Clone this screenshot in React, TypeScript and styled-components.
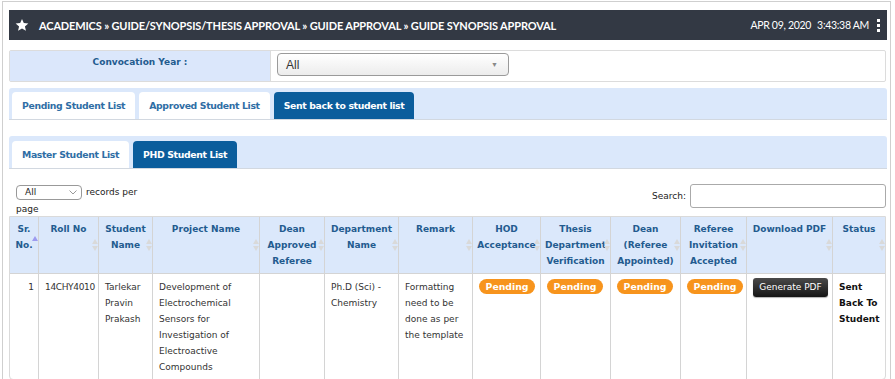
import styled, { createGlobalStyle } from "styled-components";

const GlobalStyle = createGlobalStyle`
  body {
    margin: 0;
    font-family: "DejaVu Sans", Verdana, sans-serif;
    font-size: 9px;
    color: #333;
    background: #fff;
  }
`;

const Page = styled.div`
  margin: 1px 4px 0 2px;
  border: 1px solid #cfcfcf;
  border-bottom: none;
  padding: 8px 3px 0 6px;
  height: 378px;
  box-sizing: border-box;
  overflow: hidden;
`;

const TopBar = styled.div`
  display: flex;
  align-items: center;
  height: 30px;
  background: #333944;
  color: #fff;
  padding: 0 6px 0 6px;
  font-family: Lato, "Liberation Sans", sans-serif;
  font-size: 11px;
`;

const Crumbs = styled.div`
  flex: 1;
  font-weight: bold;
  margin-left: 10px;
  letter-spacing: -0.15px;
`;

const Clock = styled.div`
  display: flex;
  gap: 6px;
  font-size: 10.5px;
  letter-spacing: -0.3px;
`;

const Dots = styled.span`
  display: flex;
  flex-direction: column;
  gap: 2px;
  margin: 0 1px 0 8px;
  span {
    width: 3px;
    height: 3px;
    background: #fff;
  }
`;

const ConvoRow = styled.div`
  display: flex;
  margin-top: 10px;
  margin-right: 1px;
  height: 30px;
  border: 1px solid #dcdcdc;
  border-radius: 2px;
`;

const ConvoLabel = styled.div`
  width: 261px;
  background: #dbe7fb;
  color: #235b8f;
  font-weight: bold;
  text-align: center;
  padding-top: 6px;
  box-sizing: border-box;
  border-right: 1px solid #dcdcdc;
`;

const ConvoCell = styled.div`
  flex: 1;
  padding: 2px 0 0 6px;
`;

const YearSelect = styled.div`
  width: 232px;
  height: 23px;
  box-sizing: border-box;
  border: 1px solid #9a9a9a;
  border-radius: 4px;
  background: linear-gradient(#ffffff, #ececec);
  display: flex;
  align-items: center;
  justify-content: space-between;
  padding: 0 10px 0 8px;
  font-family: "Liberation Sans", Arial, sans-serif;
  font-size: 12px;
  color: #333;
  span:last-child {
    font-size: 7px;
    color: #888;
  }
`;

const TabPanel = styled.div<{ $top: number; $pad: number }>`
  display: flex;
  gap: 4px;
  margin-top: ${(p) => p.$top}px;
  background: #dbe8fb;
  padding: ${(p) => p.$pad}px 3px 0 3px;
  border-bottom: 1px solid #d2d8e0;
  border-radius: 3px 3px 0 0;
`;

const Tab = styled.div<{ $active?: boolean }>`
  height: 27px;
  display: flex;
  align-items: center;
  padding: 0 10px;
  border-radius: 4px 4px 0 0;
  font-weight: bold;
  font-size: 9.3px;
  letter-spacing: -0.35px;
  background: ${(p) => (p.$active ? "#0b5d9c" : "#fff")};
  color: ${(p) => (p.$active ? "#fff" : "#2f6ea5")};
`;

const Controls = styled.div`
  display: flex;
  justify-content: space-between;
  align-items: flex-start;
  margin-top: 15px;
  padding: 0 1px 0 7px;
  height: 30px;
`;

const LengthBox = styled.div`
  width: 130px;
  line-height: 17px;
  color: #222;
`;

const LengthSelect = styled.span`
  display: inline-flex;
  align-items: center;
  justify-content: space-between;
  width: 66px;
  height: 15px;
  box-sizing: border-box;
  border: 1px solid #999;
  border-radius: 4px;
  padding: 0 4px 0 8px;
  margin: 1px 4px 0 0;
  vertical-align: top;
  font-size: 9px;
`;

const SearchBox = styled.label`
  display: flex;
  align-items: center;
  gap: 4px;
  color: #222;
`;

const SearchInput = styled.div`
  width: 196px;
  height: 24px;
  box-sizing: border-box;
  border: 1px solid #aaa;
  border-radius: 3px;
`;

const Table = styled.table`
  width: 877px;
  margin-top: 2px;
  border-collapse: separate;
  border-spacing: 0;
  table-layout: fixed;
  border: 1px solid #dadada;
  border-radius: 0 0 4px 4px;
`;

const Th = styled.th<{ $w: number }>`
  position: relative;
  box-sizing: border-box;
  width: ${(p) => p.$w}px;
  background: #dbe8fb;
  color: #235b8f;
  font-weight: bold;
  font-size: 9px;
  line-height: 16px;
  text-align: center;
  vertical-align: top;
  padding: 4px 1px 4px 1px;
  border-right: 1px solid #d4d4d4;
  border-bottom: 1px solid #d4d4d4;
  white-space: nowrap;
  &:last-child {
    border-right: none;
  }
`;

const SortIcon = styled.span<{ $asc?: boolean }>`
  position: absolute;
  right: 6px;
  top: ${(p) => (p.$asc ? "19px" : "22px")};
  width: 0;
  height: 0;
  &::before,
  &::after {
    content: "";
    position: absolute;
    left: 0;
    border-left: 3.5px solid transparent;
    border-right: 3.5px solid transparent;
  }
  &::before {
    top: 0;
    border-bottom: 5px solid ${(p) => (p.$asc ? "#9d9bf0" : "#d9d9d9")};
  }
  &::after {
    top: 7px;
    border-top: 5px solid ${(p) => (p.$asc ? "transparent" : "#d9d9d9")};
  }
`;

const Td = styled.td<{ $right?: boolean; $bold?: boolean; $tight?: boolean }>`
  font-size: 9px;
  line-height: 16px;
  vertical-align: top;
  padding: 5px 4px 4px 6px;
  color: ${(p) => (p.$bold ? "#111" : "#333")};
  font-weight: ${(p) => (p.$bold ? "bold" : "normal")};
  text-align: ${(p) => (p.$right ? "right" : "left")};
  letter-spacing: ${(p) => (p.$tight ? "-0.35px" : "normal")};
  border-right: 1px solid #d4d4d4;
  &:last-child {
    border-right: none;
  }
`;

const Badge = styled.span`
  display: inline-block;
  width: 56px;
  height: 15px;
  line-height: 15px;
  border-radius: 8px;
  background: #f7941d;
  color: #fff;
  font-weight: bold;
  text-align: center;
  font-size: 9.3px;
`;

const PdfButton = styled.span`
  display: inline-block;
  width: 75px;
  height: 19px;
  line-height: 19px;
  margin-top: -1px;
  border-radius: 3px;
  background: linear-gradient(#4a4a4a, #151515);
  color: #fff;
  text-align: center;
  font-size: 9px;
  box-shadow: 0 1px 1px rgba(0, 0, 0, 0.3);
`;

const Star = () => (
  <svg width="14" height="14" viewBox="0 0 24 24">
    <path
      fill="#fff"
      d="M12 1.5l3.1 7.2 7.8.6-5.9 5.1 1.8 7.6L12 17.9 5.2 22l1.8-7.6-5.9-5.1 7.8-.6z"
    />
  </svg>
);

const Chevron = () => (
  <svg width="8" height="5" viewBox="0 0 8 5">
    <path d="M0.5 0.5L4 4L7.5 0.5" fill="none" stroke="#999" strokeWidth="1" />
  </svg>
);

const columns: { label: string[]; w: number; asc?: boolean }[] = [
  { label: ["Sr.", "No."], w: 29, asc: true },
  { label: ["Roll No"], w: 60 },
  { label: ["Student", "Name"], w: 54 },
  { label: ["Project Name"], w: 107 },
  { label: ["Dean", "Approved", "Referee"], w: 65 },
  { label: ["Department", "Name"], w: 74 },
  { label: ["Remark"], w: 74 },
  { label: ["HOD", "Acceptance"], w: 68 },
  { label: ["Thesis", "Department", "Verification"], w: 70 },
  { label: ["Dean", "(Referee", "Appointed)"], w: 70 },
  { label: ["Referee", "Invitation", "Accepted"], w: 66 },
  { label: ["Download PDF"], w: 86 },
  { label: ["Status"], w: 52 },
];

export default function App() {
  return (
    <>
      <GlobalStyle />
      <Page>
        <TopBar>
          <Star />
          <Crumbs>
            ACADEMICS » GUIDE/SYNOPSIS/THESIS APPROVAL » GUIDE APPROVAL » GUIDE SYNOPSIS APPROVAL
          </Crumbs>
          <Clock>
            <span>APR 09, 2020</span>
            <span>3:43:38 AM</span>
          </Clock>
          <Dots>
            <span />
            <span />
            <span />
          </Dots>
        </TopBar>

        <ConvoRow>
          <ConvoLabel>Convocation Year :</ConvoLabel>
          <ConvoCell>
            <YearSelect>
              <span>All</span>
              <span>▼</span>
            </YearSelect>
          </ConvoCell>
        </ConvoRow>

        <TabPanel $top={6} $pad={4}>
          <Tab>Pending Student List</Tab>
          <Tab>Approved Student List</Tab>
          <Tab $active>Sent back to student list</Tab>
        </TabPanel>

        <TabPanel $top={16} $pad={5}>
          <Tab>Master Student List</Tab>
          <Tab $active>PHD Student List</Tab>
        </TabPanel>

        <Controls>
          <LengthBox>
            <LengthSelect>
              <span>All</span>
              <Chevron />
            </LengthSelect>
            records per page
          </LengthBox>
          <SearchBox>
            Search:
            <SearchInput />
          </SearchBox>
        </Controls>

        <Table>
          <thead>
            <tr>
              {columns.map((c) => (
                <Th key={c.label.join(" ")} $w={c.w}>
                  {c.label.map((l, i) => (
                    <div key={i}>{l}</div>
                  ))}
                  <SortIcon $asc={c.asc} />
                </Th>
              ))}
            </tr>
          </thead>
          <tbody>
            <tr>
              <Td $right>1</Td>
              <Td $tight>14CHY4010</Td>
              <Td>Tarlekar Pravin Prakash</Td>
              <Td>Development of Electrochemical Sensors for Investigation of Electroactive Compounds</Td>
              <Td />
              <Td>Ph.D (Sci) - Chemistry</Td>
              <Td>Formatting need to be done as per the template</Td>
              <Td>
                <Badge>Pending</Badge>
              </Td>
              <Td>
                <Badge>Pending</Badge>
              </Td>
              <Td>
                <Badge>Pending</Badge>
              </Td>
              <Td>
                <Badge>Pending</Badge>
              </Td>
              <Td>
                <PdfButton>Generate PDF</PdfButton>
              </Td>
              <Td $bold>Sent Back To Student</Td>
            </tr>
          </tbody>
        </Table>
      </Page>
    </>
  );
}
